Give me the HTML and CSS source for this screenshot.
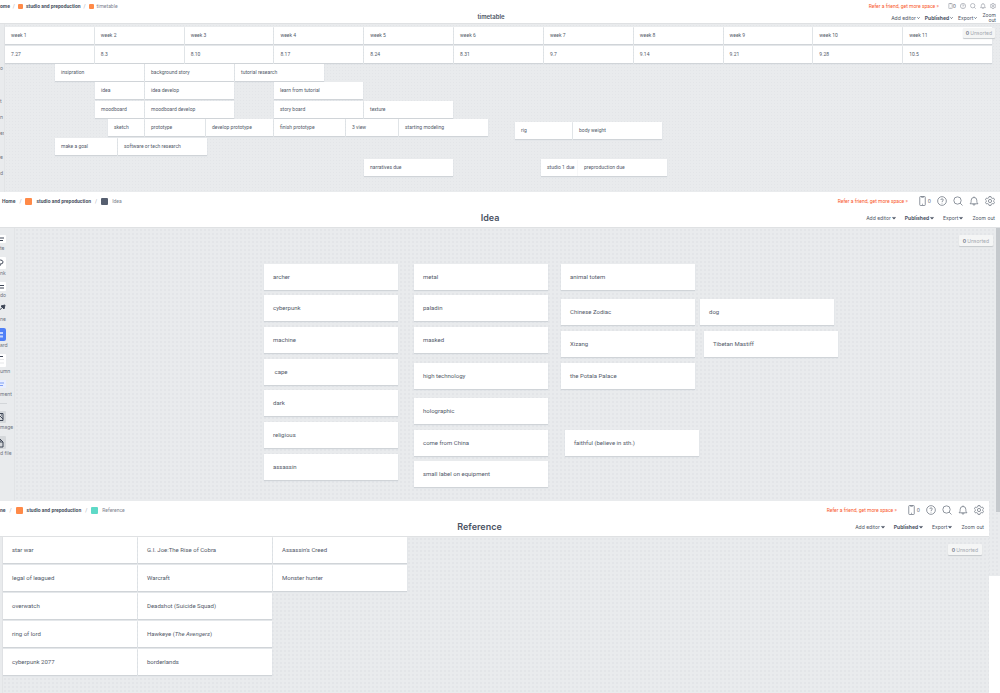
FILE: index.html
```html
<!DOCTYPE html>
<html lang="en">

<head>
    <meta charset="UTF-8">
    <meta name="viewport" content="width=device-width, initial-scale=1.0">
    <title>studio and prepoduction</title>
    <link rel="stylesheet" href="styles.css">
</head>

<body>
    <!-- icons -->
    <svg class="icon-defs" aria-hidden="true">
        <symbol id="icon-phone" viewBox="0 0 14 20">
            <rect x="1.5" y="1" width="11" height="18" rx="1.5" />
            <path d="M5 1v1.5h4V1M6 16.5h2" />
        </symbol>
        <symbol id="icon-help" viewBox="0 0 20 20">
            <circle cx="10" cy="10" r="8.7" />
            <path d="M7.6 8c0-3.2 5-3.2 5 0 0 1.8-2.6 1.8-2.6 4M10 13.6v1.4" />
        </symbol>
        <symbol id="icon-search" viewBox="0 0 20 20">
            <circle cx="9" cy="9" r="7.3" />
            <path d="M14.3 14.3l4.7 4.7" />
        </symbol>
        <symbol id="icon-bell" viewBox="0 0 20 20">
            <path d="M2 15.5c2-1.6 2.4-3 2.4-7a5.6 5.6 0 0 1 11.2 0c0 4 .4 5.4 2.4 7zM8 16c0 3.4 4 3.4 4 0M10 3V1" />
        </symbol>
        <symbol id="icon-gear" viewBox="0 0 20 20">
            <path d="M8 1.2h4l.7 2.6 1.8 1 2.6-.7 2 3.4-1.9 1.9v1.2l1.9 1.9-2 3.4-2.6-.7-1.8 1-.7 2.6H8l-.7-2.6-1.8-1-2.6.7-2-3.4 1.9-1.9V9.4L.9 7.5l2-3.4 2.6.7 1.8-1z" />
            <circle cx="10" cy="10" r="3.2" />
        </symbol>
        <symbol id="icon-chevron" viewBox="0 0 10 10">
            <path d="M1.5 3L5 6.500 8.500 3" />
        </symbol>
    </svg>

    <!-- timetable -->
    <section class="board board-timetable">
        <header class="topbar">
            <nav class="crumbs">
                <a href="#">ome</a><span class="slash">/</span>
                <a href="#"><i class="swatch orange"></i>studio and prepoduction</a><span class="slash">/</span>
                <span class="current"><i class="swatch orange"></i>timetable</span>
            </nav>
            <div class="account">
                <a href="#" class="refer">Refer a friend, get more space »</a>
                <button class="phone"><svg><use href="#icon-phone" /></svg>0</button>
                <button aria-label="Help"><svg><use href="#icon-help" /></svg></button>
                <button aria-label="Search"><svg><use href="#icon-search" /></svg></button>
                <button aria-label="Notifications"><svg><use href="#icon-bell" /></svg></button>
                <button aria-label="Settings"><svg><use href="#icon-gear" /></svg></button>
            </div>
            <h1>timetable</h1>
            <div class="menu">
                <button>Add editor<svg><use href="#icon-chevron" /></svg></button>
                <button class="strong">Published<svg><use href="#icon-chevron" /></svg></button>
                <button>Export<svg><use href="#icon-chevron" /></svg></button>
                <button class="zoom">Zoom<br>out</button>
            </div>
        </header>
        <div class="workspace">
            <aside class="labels">
                <span class="first">o</span>
                <span>t</span>
                <span>n</span>
                <span class="last">er</span>
                <span>e</span>
                <span>d</span>
            </aside>
            <div class="canvas" id="timetable-canvas">
                <div class="weeks">
                    <div class="card">week 1</div>
                    <div class="card">week 2</div>
                    <div class="card">week 3</div>
                    <div class="card">week 4</div>
                    <div class="card">week 5</div>
                    <div class="card">week 6</div>
                    <div class="card">week 7</div>
                    <div class="card">week 8</div>
                    <div class="card">week 9</div>
                    <div class="card">week 10</div>
                    <div class="card">week 11</div>
                    <div class="card">7.27</div>
                    <div class="card">8.3</div>
                    <div class="card">8.10</div>
                    <div class="card">8.17</div>
                    <div class="card">8.24</div>
                    <div class="card">8.31</div>
                    <div class="card">9.7</div>
                    <div class="card">9.14</div>
                    <div class="card">9.21</div>
                    <div class="card">9.28</div>
                    <div class="card">10.5</div>
                </div>
                <button class="unsorted"><b>0</b> Unsorted</button>
            </div>
        </div>
    </section>

    <!-- idea -->
    <section class="board board-idea">
        <header class="topbar">
            <nav class="crumbs">
                <a href="#">Home</a><span class="slash">/</span>
                <a href="#"><i class="swatch orange"></i>studio and prepoduction</a><span class="slash">/</span>
                <span class="current"><i class="swatch slate"></i>Idea</span>
            </nav>
            <div class="account">
                <a href="#" class="refer">Refer a friend, get more space »</a>
                <button class="phone"><svg><use href="#icon-phone" /></svg>0</button>
                <button aria-label="Help"><svg><use href="#icon-help" /></svg></button>
                <button aria-label="Search"><svg><use href="#icon-search" /></svg></button>
                <button aria-label="Notifications"><svg><use href="#icon-bell" /></svg></button>
                <button aria-label="Settings"><svg><use href="#icon-gear" /></svg></button>
            </div>
            <h1>Idea</h1>
            <div class="menu">
                <button>Add editor<svg><use href="#icon-chevron" /></svg></button>
                <button class="strong">Published<svg><use href="#icon-chevron" /></svg></button>
                <button>Export<svg><use href="#icon-chevron" /></svg></button>
                <button>Zoom out</button>
            </div>
        </header>
        <div class="workspace">
            <aside class="tools">
                <button>
                    <svg width="16" height="9"><rect class="paper" width="16" height="8" rx="1" /><path d="M3 3h11M3 5.5h10" /></svg>
                    te
                </button>
                <button>
                    <svg width="16" height="12"><rect class="paper" width="16" height="12" rx="1" /><path d="M8 5a2.500 2 0 1 1 3 2h-1v2" /></svg>
                    nk
                </button>
                <button>
                    <svg width="16" height="9"><rect class="paper" width="16" height="9" rx="1" /><path d="M7 3.500h7M7 6h7" /></svg>
                    do
                </button>
                <button>
                    <svg width="16" height="11"><path d="M5 10l9-8" /><path d="M15 1l-4 1 3 3z" class="tip" /></svg>
                    ne
                </button>
                <button>
                    <svg width="16" height="13"><rect class="blue" width="16" height="13" rx="2" /><path class="light" d="M4 5h3M10 5h3M4 8.500h3M10 8.500h3" /></svg>
                    ard
                </button>
                <button>
                    <svg width="16" height="13"><rect class="paper" width="16" height="13" rx="1" /><path d="M5 2.500h8" /><path class="faint" d="M2 5.500h12M2 9h12" /></svg>
                    umn
                </button>
                <button>
                    <svg width="16" height="10"><path class="bubble" d="M0 0h16v8h-5l-2 2V8H0z" /><path class="link" d="M3 3h11M3 5.500h10" /></svg>
                    ment
                </button>
                <hr>
                <button>
                    <svg width="16" height="12"><rect class="box" width="16" height="12" rx="1" /><path d="M5 2.500h8v7H5zM7 8l3-3 3 3M11 4h1" /></svg>
                    mage
                </button>
                <button>
                    <svg width="16" height="13"><rect class="box" width="16" height="13" rx="1" /><path d="M6 3h4l3 3v5H6zM10 3v3h3" /></svg>
                    d file
                </button>
            </aside>
            <div class="canvas" id="idea-canvas">
                <button class="unsorted"><b>0</b> Unsorted</button>
                <div class="scrollbar"></div>
            </div>
        </div>
    </section>

    <!-- reference -->
    <section class="board board-reference">
        <header class="topbar">
            <nav class="crumbs">
                <a href="#">ne</a><span class="slash">/</span>
                <a href="#"><i class="swatch orange"></i>studio and prepoduction</a><span class="slash">/</span>
                <span class="current"><i class="swatch mint"></i>Reference</span>
            </nav>
            <div class="account">
                <a href="#" class="refer">Refer a friend, get more space »</a>
                <button class="phone"><svg><use href="#icon-phone" /></svg>0</button>
                <button aria-label="Help"><svg><use href="#icon-help" /></svg></button>
                <button aria-label="Search"><svg><use href="#icon-search" /></svg></button>
                <button aria-label="Notifications"><svg><use href="#icon-bell" /></svg></button>
                <button aria-label="Settings"><svg><use href="#icon-gear" /></svg></button>
            </div>
            <h1>Reference</h1>
            <div class="menu">
                <button>Add editor<svg><use href="#icon-chevron" /></svg></button>
                <button class="strong">Published<svg><use href="#icon-chevron" /></svg></button>
                <button>Export<svg><use href="#icon-chevron" /></svg></button>
                <button>Zoom out</button>
            </div>
        </header>
        <div class="workspace">
            <aside class="labels"></aside>
            <div class="canvas">
                <div class="references">
                    <div class="card">star war</div>
                    <div class="card">legal of leagued</div>
                    <div class="card">overwatch</div>
                    <div class="card">ring of lord</div>
                    <div class="card">cyberpunk 2077</div>
                    <div class="card">G.I. Joe:The Rise of Cobra</div>
                    <div class="card">Warcraft</div>
                    <div class="card">Deadshot (Suicide Squad)</div>
                    <div class="card">Hawkeye (<em>The Avengers</em>)</div>
                    <div class="card">borderlands</div>
                    <div class="card">Assassin's Creed</div>
                    <div class="card">Monster hunter</div>
                </div>
                <button class="unsorted"><b>0</b> Unsorted</button>
            </div>
        </div>
    </section>

    <script src="script.js"></script>
</body>

</html>
```
FILE: styles.css
```css
* {
    box-sizing: border-box;
}

body {
    margin: 0;
    background: #fff;
    color: #4b5363;
    font-family: Inter, "Liberation Sans", sans-serif;
    font-size: 5px;
    overflow: hidden;
}

button {
    display: flex;
    align-items: center;
    margin: 0;
    padding: 0;
    border: 0;
    background: none;
    color: inherit;
    font: inherit;
    white-space: nowrap;
    cursor: pointer;
}

a {
    color: inherit;
    text-decoration: none;
}

.icon-defs {
    display: none;
}

/* boards */
.board {
    display: flex;
    flex-direction: column;
    position: relative;
    overflow: hidden;
}

.board-timetable {
    height: 192px;
    margin-left: -18px;
}

.board-idea {
    height: 384px;
    margin-left: -20px;
}

/* lies over the lower part of the idea board */
.board-reference {
    height: 192px;
    margin: -75px 11px 0 -30px;
}

/* top bar */
.topbar {
    display: grid;
    grid-template-columns: 1fr auto 1fr;
    grid-template-rows: 18px 15px;
    height: 36px;
    padding: 0 5px;
    background: #fff;
    border-bottom: 1px solid #dfe1e3;
    align-items: center;
    flex: none;
}

.crumbs {
    display: flex;
    align-items: center;
    gap: 4px;
    grid-column: 1;
    padding-left: 17px;
    font-family: Roboto, "Liberation Sans", sans-serif;
    font-weight: 700;
    white-space: nowrap;
}

.board-reference .crumbs {
    padding-left: 25px;
}

.crumbs a,
.crumbs .current {
    display: flex;
    align-items: center;
    gap: 4px;
}

.crumbs .current {
    font-weight: 400;
    color: #7d838e;
}

.slash {
    color: #a5a9b0;
    font-weight: 400;
}

.swatch {
    width: 7px;
    height: 7px;
    border-radius: 1px;
}

.orange {
    background: #ff8a48;
}

.slate {
    background: #565f70;
}

.mint {
    background: #5ed9c7;
}

.account {
    display: flex;
    align-items: center;
    justify-content: flex-end;
    gap: 6px;
    grid-column: 3;
    white-space: nowrap;
}

.account svg {
    width: 10px;
    height: 10px;
    fill: none;
    stroke: #757c88;
    stroke-width: 1.6;
}

.account .phone svg {
    width: 7px;
    margin-right: 2px;
}

.refer {
    color: #f9572c;
    margin-right: 5px;
    font-family: Roboto, "Liberation Sans", sans-serif;
}

.topbar h1 {
    grid-column: 2;
    margin: 0;
    font-size: 9px;
    font-weight: 600;
    line-height: 12px;
}

.menu {
    display: flex;
    align-items: center;
    justify-content: flex-end;
    gap: 9px;
    grid-column: 3;
    padding-top: 1px;
}

.menu svg {
    width: 4px;
    height: 4px;
    margin-left: 1px;
    fill: none;
    stroke: #4b5363;
    stroke-width: 3;
}

.menu .strong {
    font-weight: 700;
}

/* the timetable board is zoomed out a bit more */
.board-timetable .topbar {
    grid-template-rows: 12px 10px;
    height: 24px;
    padding: 0 4px;
}

.board-timetable .crumbs {
    gap: 3px;
    padding-left: 14px;
}

.board-timetable .crumbs a,
.board-timetable .crumbs .current {
    gap: 3px;
}

.board-timetable .swatch {
    width: 5px;
    height: 5px;
}

.board-timetable .account {
    gap: 4px;
}

.board-timetable .account svg {
    width: 6px;
    height: 6px;
}

.board-timetable .account .phone svg {
    width: 5px;
    margin-right: 0;
}

.board-timetable h1 {
    font-size: 6px;
}

.board-timetable .menu {
    gap: 5px;
}

.board-timetable .menu svg {
    width: 3px;
}

.board-timetable .zoom {
    line-height: 5px;
    text-align: right;
}

/* workspace */
.workspace {
    display: flex;
    flex: 1;
    background: #e9ebed;
}

.canvas {
    position: relative;
    flex: 1;
    background-image: radial-gradient(circle, #e3e5e8 1px, transparent 1px);
    background-size: 4px 4px;
    border-left: 1px solid #e2e4e6;
}

.board-timetable .canvas {
    background-size: 3px 3px;
}

.labels {
    width: 22px;
    padding-left: 18px;
    color: #6d7480;
}

.labels span {
    display: block;
    height: 16px;
    line-height: 6px;
}

.board-timetable .labels {
    padding-top: 41px;
}

.labels .first {
    margin-bottom: 17px;
}

.labels .last {
    margin-bottom: 8px;
}

.board-reference .labels {
    width: 32px;
}

.tools {
    display: flex;
    flex-direction: column;
    gap: 5px;
    width: 34px;
    padding: 7px 0 0 20px;
    color: #6d7480;
}

.tools button {
    flex-direction: column;
    align-items: flex-start;
    line-height: 8px;
}

.tools hr {
    width: 7px;
    margin: 0 0 2px;
    border: 0;
    border-top: 1px solid #d3d6d9;
}

/* the left half of every tool lies outside the window */
.tools svg {
    margin-left: -10px;
    fill: none;
    stroke: #3f4757;
}

.tools .paper {
    fill: #fff;
    stroke: none;
}

.tools .tip {
    fill: #3f4757;
}

.tools .blue {
    fill: #5080f7;
    stroke: none;
}

.tools .light {
    stroke: #c5d5ff;
    stroke-width: 2;
}

.tools .faint {
    stroke: #e6e7e9;
}

.tools .bubble {
    fill: #e8eeff;
    stroke: none;
}

.tools .link {
    stroke: #7f9ff5;
}

.tools .box {
    fill: #d5d8db;
    stroke: none;
}

/* cards */
.card {
    display: flex;
    align-items: center;
    height: 26px;
    padding: 0 0 2px 9px;
    background: #fff;
    box-shadow: 0 1px 1px #d0d4d8;
    color: #535a69;
    font-family: Roboto, "Liberation Sans", sans-serif;
    font-size: 6px;
    white-space: pre;
}

.canvas > .card {
    position: absolute;
}

.board-timetable .card {
    height: 17px;
    padding-left: 6px;
    font-size: 5px;
}

.weeks {
    display: grid;
    grid-template-columns: repeat(11, 1fr);
    gap: 2px 1px;
    padding: 3px 8px 0 0;
}

.references {
    display: grid;
    grid-template-rows: repeat(5, 26px);
    grid-auto-columns: 134px;
    grid-auto-flow: column;
    justify-content: start;
    gap: 2px 1px;
}

.unsorted {
    position: absolute;
    top: 7px;
    right: 7px;
    height: 11px;
    padding: 0 4px;
    gap: 1px;
    background: #f4f5f5;
    border-radius: 1px;
    box-shadow: 0 1px 1px #c5c9cd;
    color: #a3a8af;
}

.unsorted b {
    color: #7d838e;
}

.board-timetable .unsorted {
    top: 4px;
    right: 5px;
    height: 10px;
    padding: 0 3px;
}

.scrollbar {
    position: absolute;
    top: 0;
    right: 0;
    width: 4px;
    height: 284px;
    background: #c5c9cd;
}
```
FILE: script.js
```js
// cards on the free canvases: text, x, y, width
const timetableCards = [
    ['insipration', 50, 40, 89],
    ['background story', 140, 40, 89],
    ['tutorial research', 230, 40, 89],
    ['idea', 90, 58, 49],
    ['idea develop', 140, 58, 89],
    ['learn from tutorial', 269, 58, 89],
    ['moodboard', 90, 77, 49],
    ['moodboard develop', 140, 77, 89],
    ['story board', 269, 77, 89],
    ['texture', 359, 77, 89],
    ['sketch', 103, 95, 36],
    ['prototype', 140, 95, 60],
    ['develop prototype', 201, 95, 67],
    ['finish prototype', 269, 95, 71],
    ['3 view', 341, 95, 52],
    ['starting modeling', 394, 95, 89],
    ['rig', 510, 98, 57],
    ['body weight', 568, 98, 89],
    ['make a goal', 50, 114, 62],
    ['software or tech research', 113, 114, 89],
    ['narratives due', 359, 135, 89],
    ['studio 1 due', 536, 135, 37],
    ['preproduction due', 573, 135, 89]
];

const ideaCards = [
    ['archer', 249, 36, 134],
    ['cyberpunk', 249, 67, 134],
    ['machine', 249, 99, 134],
    [' cape', 249, 131, 134],
    ['dark', 249, 162, 134],
    ['religious', 249, 194, 134],
    ['assassin', 249, 226, 134],
    ['metal', 399, 36, 134],
    ['paladin', 399, 67, 134],
    ['masked', 399, 99, 134],
    ['high technology', 399, 135, 134],
    ['holographic', 399, 170, 134],
    ['come from China', 399, 202, 134],
    ['small label on equipment', 399, 233, 134],
    ['animal totem', 546, 36, 134],
    ['Chinese Zodiac', 546, 71, 134],
    ['Xizang', 546, 103, 134],
    ['the Potala Palace', 546, 135, 134],
    ['faithful (believe in sth.)', 550, 202, 134],
    ['dog', 685, 71, 134],
    ['Tibetan Mastiff', 689, 103, 134]
];

function drawCards(canvas, cards) {
    cards.forEach(([text, x, y, width]) => {
        const card = document.createElement('div');
        card.className = 'card';
        card.textContent = text;
        card.style.left = x + 'px';
        card.style.top = y + 'px';
        card.style.width = width + 'px';
        canvas.appendChild(card);
    });
}

drawCards(document.getElementById('timetable-canvas'), timetableCards);
drawCards(document.getElementById('idea-canvas'), ideaCards);
```
